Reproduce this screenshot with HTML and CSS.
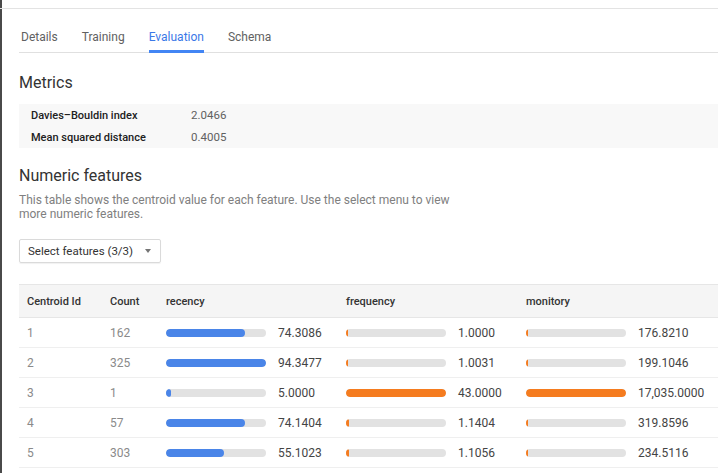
FILE: index.html
```html
<!DOCTYPE html>
<html>
<head>
<meta charset="utf-8">
<link rel="stylesheet" href="styles.css">
</head>
<body>
<div class="page">
  <nav class="tabs">
    <div class="tab">Details</div>
    <div class="tab">Training</div>
    <div class="tab active">Evaluation</div>
    <div class="tab">Schema</div>
  </nav>
  <section class="content">
    <h2 class="heading metrics-heading">Metrics</h2>
    <div class="metrics">
      <div class="metric-row"><span class="metric-label">Davies–Bouldin index</span><span class="metric-value">2.0466</span></div>
      <div class="metric-row"><span class="metric-label">Mean squared distance</span><span class="metric-value">0.4005</span></div>
    </div>
    <h2 class="heading numeric-heading">Numeric features</h2>
    <p class="desc">This table shows the centroid value for each feature. Use the select menu to view more numeric features.</p>
    <div class="select">Select features (3/3)<span class="caret"></span></div>
    <div class="table">
      <div class="row head">
        <div class="cell">Centroid Id</div>
        <div class="cell">Count</div>
        <div class="cell">recency</div>
        <div class="cell">frequency</div>
        <div class="cell">monitory</div>
      </div>
      <div class="row">
        <div class="cell muted">1</div><div class="cell muted">162</div>
        <div class="cell feat"><div class="track"><div class="fill blue" style="width:79%"></div></div><span class="val">74.3086</span></div>
        <div class="cell feat"><div class="track"><div class="fill orange" style="width:2.3%"></div></div><span class="val">1.0000</span></div>
        <div class="cell feat"><div class="track"><div class="fill orange" style="width:1.1%"></div></div><span class="val">176.8210</span></div>
      </div>
      <div class="row">
        <div class="cell muted">2</div><div class="cell muted">325</div>
        <div class="cell feat"><div class="track"><div class="fill blue" style="width:100%"></div></div><span class="val">94.3477</span></div>
        <div class="cell feat"><div class="track"><div class="fill orange" style="width:2.3%"></div></div><span class="val">1.0031</span></div>
        <div class="cell feat"><div class="track"><div class="fill orange" style="width:1.2%"></div></div><span class="val">199.1046</span></div>
      </div>
      <div class="row">
        <div class="cell muted">3</div><div class="cell muted">1</div>
        <div class="cell feat"><div class="track"><div class="fill blue" style="width:5.3%"></div></div><span class="val">5.0000</span></div>
        <div class="cell feat"><div class="track"><div class="fill orange" style="width:100%"></div></div><span class="val">43.0000</span></div>
        <div class="cell feat"><div class="track"><div class="fill orange" style="width:100%"></div></div><span class="val">17,035.0000</span></div>
      </div>
      <div class="row">
        <div class="cell muted">4</div><div class="cell muted">57</div>
        <div class="cell feat"><div class="track"><div class="fill blue" style="width:78.6%"></div></div><span class="val">74.1404</span></div>
        <div class="cell feat"><div class="track"><div class="fill orange" style="width:2.7%"></div></div><span class="val">1.1404</span></div>
        <div class="cell feat"><div class="track"><div class="fill orange" style="width:1.9%"></div></div><span class="val">319.8596</span></div>
      </div>
      <div class="row">
        <div class="cell muted">5</div><div class="cell muted">303</div>
        <div class="cell feat"><div class="track"><div class="fill blue" style="width:58.4%"></div></div><span class="val">55.1023</span></div>
        <div class="cell feat"><div class="track"><div class="fill orange" style="width:2.6%"></div></div><span class="val">1.1056</span></div>
        <div class="cell feat"><div class="track"><div class="fill orange" style="width:1.4%"></div></div><span class="val">234.5116</span></div>
      </div>
    </div>
  </section>
</div>
</body>
</html>
```

FILE: styles.css
```css
html, body {
  margin: 0;
  padding: 0;
  background: #fff;
}
body {
  font-family: Roboto, "Liberation Sans", Arial, sans-serif;
  color: #212121;
  height: 473px;
  overflow: hidden;
}
.page {
  border-left: 2px solid #4a4a4a;
  min-height: 473px;
  box-sizing: border-box;
  padding-top: 8px;
}
.tabs {
  border-top: 1px solid #e3e3e3;
  margin-left: -2px;
  padding-left: 21px;
  display: flex;
  gap: 24px;
  position: relative;
}
.tabs::after {
  content: "";
  position: absolute;
  left: 19px;
  right: 0;
  bottom: 0;
  border-bottom: 1px solid #e0e0e0;
}
.tab {
  font-size: 12px;
  line-height: 16px;
  color: #616161;
  height: 44px;
  box-sizing: border-box;
  padding-top: 20px;
  border-bottom: 3px solid transparent;
  position: relative;
  z-index: 1;
}
.tab.active {
  color: #3b78e7;
  border-bottom-color: #4285f4;
}
.content {
  padding-left: 17px;
}
.heading {
  font-size: 16px;
  font-weight: 400;
  line-height: 20px;
  color: #333;
  margin: 0;
}
.metrics-heading {
  margin-top: 20px;
}
.metrics {
  margin-top: 11px;
  background: #f8f8f8;
}
.metric-row {
  display: flex;
  height: 22px;
  align-items: center;
  font-size: 11px;
}
.metric-label {
  width: 160px;
  padding-left: 12px;
  color: #212121;
  font-weight: 500;
}
.metric-value {
  color: #616161;
  font-size: 11.5px;
}
.numeric-heading {
  margin-top: 18px;
}
.desc {
  margin: 7px 0 0;
  font-size: 12px;
  line-height: 14px;
  color: #808080;
  max-width: 440px;
}
.select {
  margin-top: 18px;
  width: 142px;
  height: 24px;
  box-sizing: border-box;
  border: 1px solid #dadada;
  border-radius: 2px;
  box-shadow: 0 1px 1px rgba(0, 0, 0, 0.06);
  display: flex;
  align-items: center;
  padding-left: 8px;
  font-size: 11.5px;
  color: #333;
}
.caret {
  margin-left: 12px;
  width: 0;
  height: 0;
  border-left: 3px solid transparent;
  border-right: 3px solid transparent;
  border-top: 4px solid #757575;
}
.table {
  margin-top: 21px;
  border-top: 1px solid #e6e6e6;
}
.row {
  display: grid;
  grid-template-columns: 91px 56px 180px 180px 1fr;
  height: 30px;
  align-items: center;
  border-bottom: 1px solid #efefef;
  box-sizing: border-box;
}
.row.head {
  height: 33px;
  background: #f5f5f5;
  border-bottom: 1px solid #e6e6e6;
}
.cell {
  font-size: 11px;
  color: #333;
  font-weight: 500;
}
.row .cell:first-child {
  padding-left: 8px;
}
.muted {
  color: #8a8a8a;
  font-weight: 400;
  font-size: 12px;
}
.feat {
  display: flex;
  align-items: center;
  gap: 12px;
  font-weight: 400;
}
.track {
  width: 100px;
  height: 8px;
  border-radius: 4px;
  background: #e2e2e2;
  overflow: hidden;
}
.fill {
  height: 100%;
  min-width: 2px;
  border-radius: 4px;
}
.blue {
  background: #4a85e8;
}
.orange {
  background: #f57c1f;
}
.val {
  font-size: 12px;
  color: #444;
}
```
